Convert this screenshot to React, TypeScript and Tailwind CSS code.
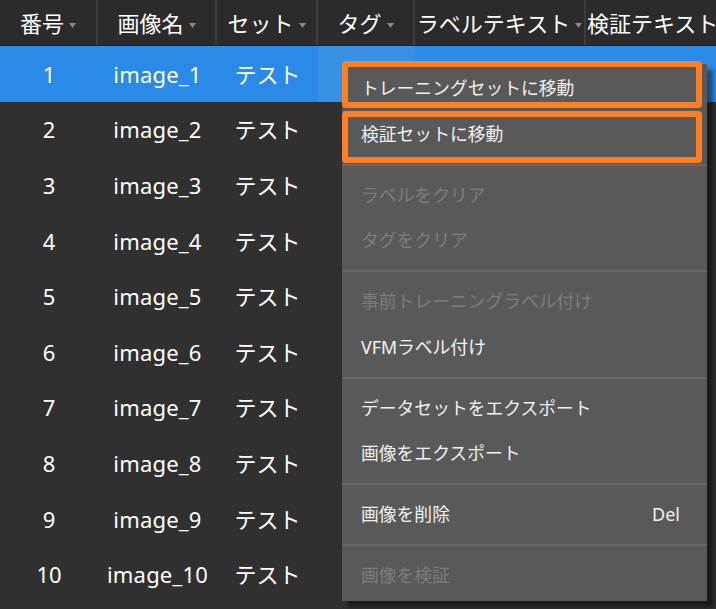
import React from "react";

const font = { fontFamily: '"Noto Sans", "Noto Sans CJK JP", sans-serif' };

const columns = [
  { name: "番号", w: "w-[98px]" },
  { name: "画像名", w: "w-[119px]" },
  { name: "セット", w: "w-[101px]" },
  { name: "タグ", w: "w-[97px]" },
  { name: "ラベルテキスト", w: "w-[171px]" },
  { name: "検証テキスト", w: "w-[171px]" },
];

type MenuEntry =
  | { sep: true }
  | { sep?: false; label: string; disabled?: boolean; shortcut?: string };

const menu: MenuEntry[] = [
  { label: "トレーニングセットに移動" },
  { label: "検証セットに移動" },
  { sep: true },
  { label: "ラベルをクリア", disabled: true },
  { label: "タグをクリア", disabled: true },
  { sep: true },
  { label: "事前トレーニングラベル付け", disabled: true },
  { label: "VFMラベル付け" },
  { sep: true },
  { label: "データセットをエクスポート" },
  { label: "画像をエクスポート" },
  { sep: true },
  { label: "画像を削除", shortcut: "Del" },
  { sep: true },
  { label: "画像を検証", disabled: true },
];

function SortArrow() {
  return (
    <svg width="7" height="5" viewBox="0 0 7 5" className="ml-[5px] mt-[6px] shrink-0">
      <path d="M0 0 L7 0 L3.5 5 Z" fill="#8a8a8a" />
    </svg>
  );
}

export default function App() {
  const rows = Array.from({ length: 10 }, (_, i) => i + 1);

  return (
    <div className="relative w-[716px] h-[609px] overflow-hidden bg-[#303030] text-white" style={font}>
      {/* header */}
      <div className="flex h-[46px] bg-[#2b2b2b] border-b border-[#1f1f1f]">
        {columns.map((c, i) => (
          <div
            key={c.name}
            className={`${c.w} shrink-0 flex items-center justify-center border-r-2 border-[#3d3d3d] text-[22px] leading-none whitespace-nowrap ${i === 5 ? "justify-start pl-[1px]" : ""}`}
          >
            <span>{c.name}</span>
            {i < 5 && <SortArrow />}
          </div>
        ))}
      </div>

      {/* body */}
      <div className="flex flex-col">
        {rows.map((n) => (
          <div
            key={n}
            className={`flex h-[55.6px] items-center text-[22px] leading-none ${n === 1 ? "bg-[#2b8ae6]" : ""}`}
          >
            <div className="w-[98px] shrink-0 text-center">{n}</div>
            <div className="w-[119px] shrink-0 text-center tracking-[0.2px]">image_{n}</div>
            <div className="w-[101px] shrink-0 text-center">テスト</div>
            <div className={`w-[97px] h-full shrink-0 ${n === 1 ? "bg-[#3790e4]" : ""}`} />
          </div>
        ))}
      </div>

      {/* context menu */}
      <div className="absolute left-[342px] top-[64px] w-[365px] py-[2px] bg-[#595959] shadow-[6px_6px_4px_rgba(0,0,0,0.45)]">
        {menu.map((m, i) =>
          m.sep ? (
            <div key={i} className="h-[15.5px] flex items-center">
              <div className="h-[2px] w-full bg-[#676767]" />
            </div>
          ) : (
            <div
              key={i}
              className={`h-[45.5px] flex items-center justify-between pl-[19px] pr-[27px] text-[17.8px] ${m.disabled ? "text-[#7d7d7d]" : "text-[#f2f2f2]"}`}
            >
              <span>{m.label}</span>
              {m.shortcut && <span className="text-[18px]">{m.shortcut}</span>}
            </div>
          )
        )}
      </div>

      {/* highlight annotations */}
      <div className="absolute left-[342px] top-[61px] w-[360px] h-[47px] border-[6px] border-[#ff7f27] rounded-[4px]" />
      <div className="absolute left-[342px] top-[111px] w-[360px] h-[52px] border-[6px] border-[#ff7f27] rounded-[4px]" />
    </div>
  );
}
